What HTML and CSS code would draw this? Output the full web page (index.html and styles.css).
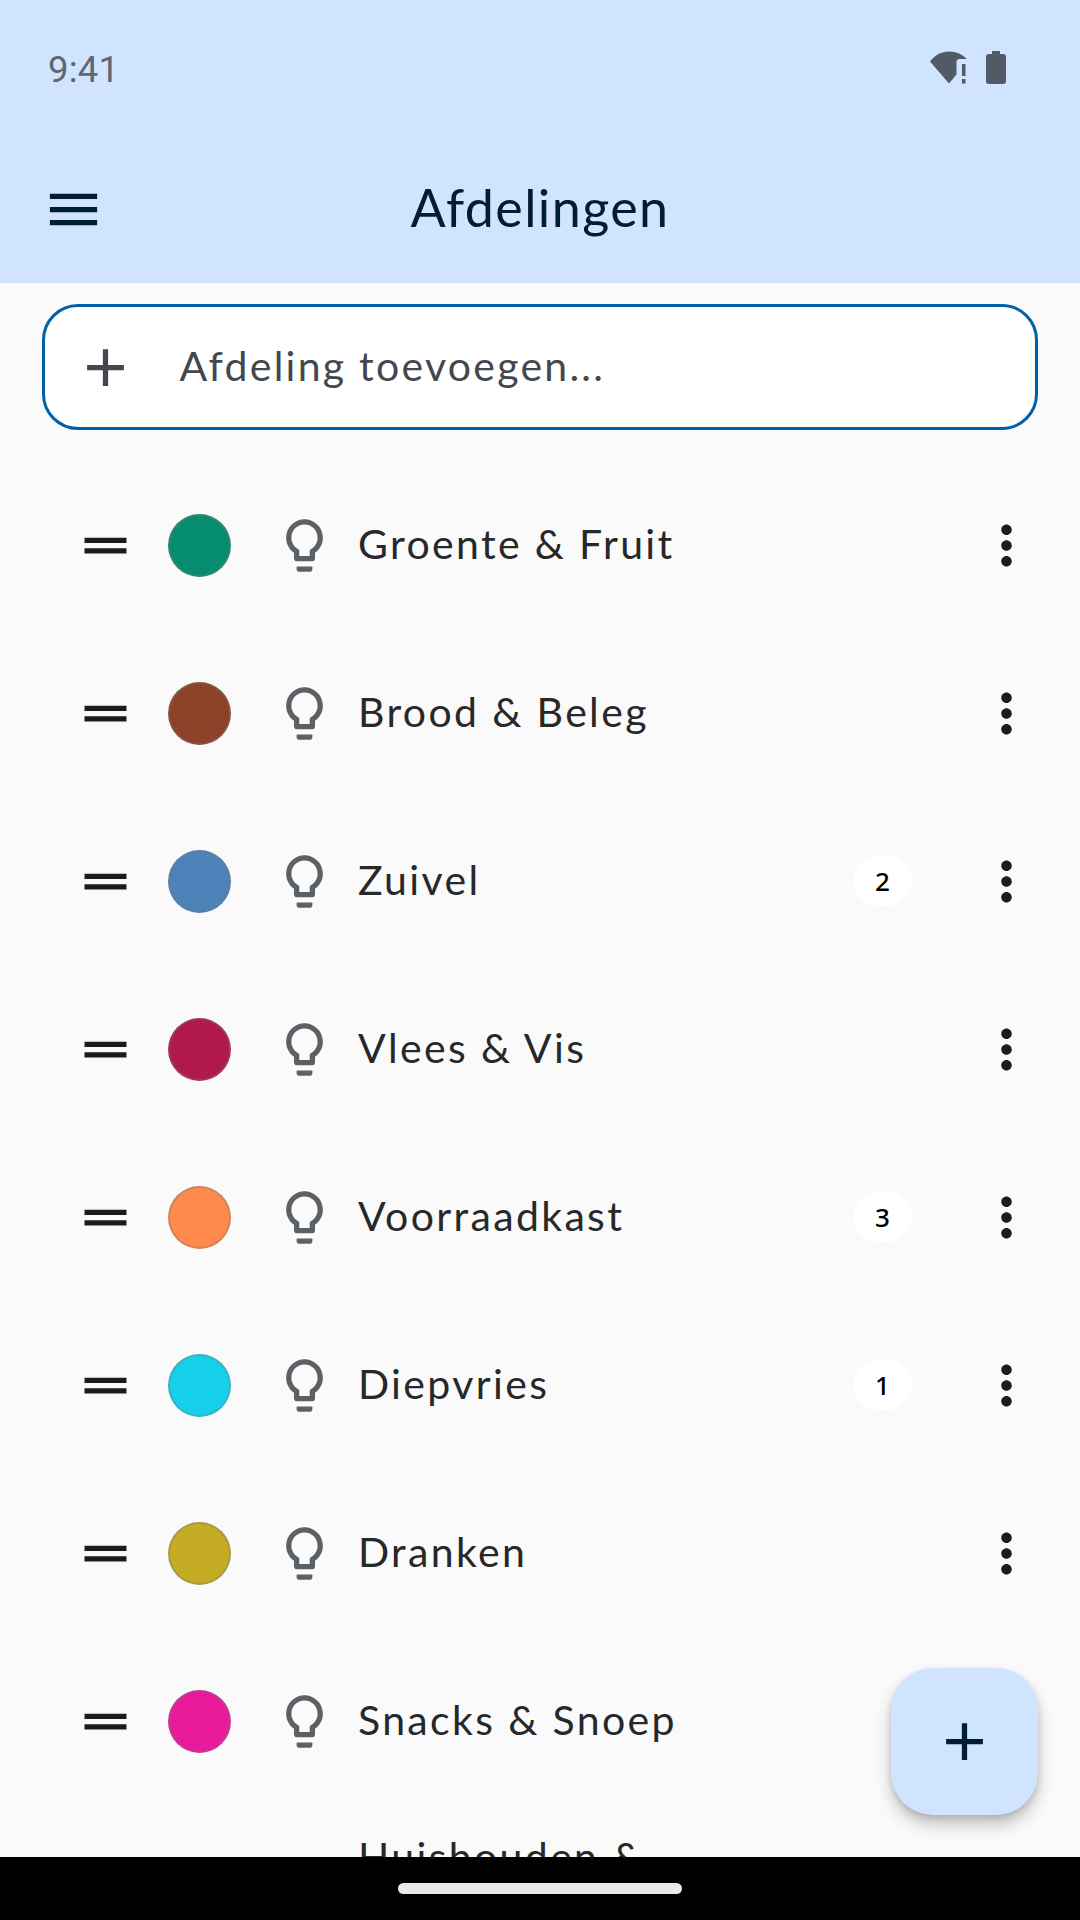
FILE: index.html
```html
<!DOCTYPE html>
<html lang="nl">
<head>
<meta charset="utf-8">
<title>Afdelingen</title>
<link rel="stylesheet" href="styles.css">
</head>
<body>
<svg class="defs" width="0" height="0" aria-hidden="true">
  <symbol id="i-drag" viewBox="0 0 24 24"><path d="M20 9H4v2h16V9zM4 15h16v-2H4v2z"/></symbol>
  <symbol id="i-bulb" viewBox="0 0 24 24"><path d="M9 21c0 .55.45 1 1 1h4c.55 0 1-.45 1-1v-1H9v1zm3-19C8.14 2 5 5.14 5 9c0 2.38 1.19 4.47 3 5.74V17c0 .55.45 1 1 1h6c.55 0 1-.45 1-1v-2.26c1.81-1.27 3-3.36 3-5.74 0-3.86-3.14-7-7-7zm2.85 11.1l-.85.6V16h-4v-2.3l-.85-.6C7.8 12.16 7 10.63 7 9c0-2.76 2.24-5 5-5s5 2.24 5 5c0 1.63-.8 3.16-2.15 4.1z"/></symbol>
  <symbol id="i-more" viewBox="0 0 24 24"><path d="M12 8c1.1 0 2-.9 2-2s-.9-2-2-2-2 .9-2 2 .9 2 2 2zm0 2c-1.1 0-2 .9-2 2s.9 2 2 2 2-.9 2-2-.9-2-2-2zm0 6c-1.1 0-2 .9-2 2s.9 2 2 2 2-.9 2-2-.9-2-2-2z"/></symbol>
  <symbol id="i-add" viewBox="0 0 24 24"><path d="M19 13h-6v6h-2v-6H5v-2h6V5h2v6h6v2z"/></symbol>
</svg>
<div class="screen">
  <header class="appbar">
    <div class="statusbar">
      <span class="clock">9:41</span>
      <div class="status-icons">
        <svg class="wifi" viewBox="0 0 38 33"><path d="M0 10.500C5 4 11.500 0.500 19 0.500c7.500 0 13.500 3 18 7.500h-7.500c-1.800 0-3 1.200-3 3v12.500L19 32.500z"/><path d="M32 13h3.500v12H32zM32 28h3.500v4.500H32z"/></svg>
        <svg class="battery" viewBox="0 0 20 33"><path d="M6 0h8v3h3.500c1.400 0 2.500 1.100 2.500 2.500V30.500c0 1.400-1.100 2.500-2.500 2.500h-15C1.100 33 0 31.900 0 30.500V5.500C0 4.100 1.100 3 2.500 3H6z"/></svg>
      </div>
    </div>
    <div class="toolbar">
      <svg class="icon menu-icon" viewBox="0 0 24 24"><path d="M3 18h18v-2H3v2zm0-5h18v-2H3v2zm0-7v2h18V6H3z"/></svg>
      <h1 class="title">Afdelingen</h1>
    </div>
  </header>
  <main class="content">
    <div class="add-field">
      <svg class="icon add-icon"><use href="#i-add"/></svg>
      <span class="hint">Afdeling toevoegen...</span>
    </div>
    <ul class="list">
      <li class="row"><svg class="icon drag"><use href="#i-drag"/></svg><span class="dot dot-green"></span><svg class="icon bulb"><use href="#i-bulb"/></svg><span class="name">Groente &amp; Fruit</span><span class="more"><svg class="icon"><use href="#i-more"/></svg></span></li>
      <li class="row"><svg class="icon drag"><use href="#i-drag"/></svg><span class="dot dot-brown"></span><svg class="icon bulb"><use href="#i-bulb"/></svg><span class="name">Brood &amp; Beleg</span><span class="more"><svg class="icon"><use href="#i-more"/></svg></span></li>
      <li class="row"><svg class="icon drag"><use href="#i-drag"/></svg><span class="dot dot-blue"></span><svg class="icon bulb"><use href="#i-bulb"/></svg><span class="name">Zuivel</span><span class="badge">2</span><span class="more"><svg class="icon"><use href="#i-more"/></svg></span></li>
      <li class="row"><svg class="icon drag"><use href="#i-drag"/></svg><span class="dot dot-red"></span><svg class="icon bulb"><use href="#i-bulb"/></svg><span class="name">Vlees &amp; Vis</span><span class="more"><svg class="icon"><use href="#i-more"/></svg></span></li>
      <li class="row"><svg class="icon drag"><use href="#i-drag"/></svg><span class="dot dot-orange"></span><svg class="icon bulb"><use href="#i-bulb"/></svg><span class="name">Voorraadkast</span><span class="badge">3</span><span class="more"><svg class="icon"><use href="#i-more"/></svg></span></li>
      <li class="row"><svg class="icon drag"><use href="#i-drag"/></svg><span class="dot dot-cyan"></span><svg class="icon bulb"><use href="#i-bulb"/></svg><span class="name">Diepvries</span><span class="badge">1</span><span class="more"><svg class="icon"><use href="#i-more"/></svg></span></li>
      <li class="row"><svg class="icon drag"><use href="#i-drag"/></svg><span class="dot dot-yellow"></span><svg class="icon bulb"><use href="#i-bulb"/></svg><span class="name">Dranken</span><span class="more"><svg class="icon"><use href="#i-more"/></svg></span></li>
      <li class="row"><svg class="icon drag"><use href="#i-drag"/></svg><span class="dot dot-pink"></span><svg class="icon bulb"><use href="#i-bulb"/></svg><span class="name">Snacks &amp; Snoep</span><span class="more"><svg class="icon"><use href="#i-more"/></svg></span></li>
      <li class="row"><svg class="icon drag"><use href="#i-drag"/></svg><span class="dot"></span><svg class="icon bulb"><use href="#i-bulb"/></svg><span class="name">Huishouden &amp;<br>&nbsp;</span></li>
    </ul>
  </main>
  <button class="fab" type="button" aria-label="Toevoegen"><svg class="icon"><use href="#i-add"/></svg></button>
  <div class="navbar"><span class="handle"></span></div>
</div>
</body>
</html>
```

FILE: styles.css
```css
* { box-sizing: border-box; }
html, body { margin: 0; padding: 0; }
body { background: #fafafa; font-family: "Lato", "Noto Sans", sans-serif; }
.defs { position: absolute; }

.screen { position: relative; width: 1080px; height: 1920px; overflow: hidden; background: #fafafa; }
.icon { display: block; width: 63px; height: 63px; fill: currentColor; flex: none; }

.appbar { height: 283px; background: #d1e4ff; color: #001d36; }
.statusbar { height: 146.500px; display: flex; align-items: flex-start; justify-content: space-between; padding: 49px 74px 0 48px; }
.clock { font-family: "Roboto", sans-serif; font-size: 36.500px; font-weight: 400; line-height: 42px; letter-spacing: 0.200px; color: #5f6671; }
.status-icons { display: flex; align-items: flex-start; gap: 18px; padding-top: 2px; color: #535a67; }
.wifi { display: block; width: 38px; height: 33px; fill: currentColor; }
.battery { display: block; width: 20px; height: 33px; fill: currentColor; }

.toolbar { position: relative; height: 126px; display: flex; align-items: center; justify-content: center; }
.menu-icon { position: absolute; left: 42px; top: 31.500px; }
.title { margin: 0; font-size: 52px; line-height: 64px; font-weight: 400; letter-spacing: 1.400px; padding-bottom: 5px; box-sizing: content-box; }

.content { display: flex; flex-direction: column; }
.add-field { margin: 21px 42px 31px; height: 126px; border: 3px solid #0061a4; border-radius: 36px; background: #fff; display: flex; align-items: center; gap: 43px; padding-left: 28.500px; color: #44474e; }
.hint { font-size: 41px; font-weight: 400; letter-spacing: 2.250px; line-height: 63px; padding-bottom: 3px; box-sizing: content-box; }

.list { list-style: none; margin: 0; padding: 0; }
.row { height: 168px; display: flex; align-items: center; padding: 0 10.500px 0 73.500px; }
.drag { color: #1a1c1e; margin-right: 31.500px; }
.dot { width: 63px; height: 63px; border-radius: 50%; flex: none; margin-right: 42px; border: 2.600px solid rgba(120, 120, 120, 0.35); background-clip: border-box; }
.bulb { color: #5c6166; margin-right: 22px; }
.name { flex: 1; font-size: 41px; font-weight: 400; line-height: 63px; letter-spacing: 2.350px; color: #26282a; padding-bottom: 3px; }
.badge { width: 59px; height: 50px; border-radius: 25px; background: #fff; margin-right: 31.500px; display: flex; align-items: center; justify-content: center; font-family: "Noto Sans", sans-serif; font-size: 26px; font-weight: 500; color: #000; }
.more { width: 126px; height: 126px; display: flex; align-items: center; justify-content: center; color: #1a1c1e; flex: none; }

.dot-green { background-color: #068d6f; }
.dot-brown { background-color: #8b4229; }
.dot-blue { background-color: #4d82b8; }
.dot-red { background-color: #b0184e; }
.dot-orange { background-color: #ff8a4c; }
.dot-cyan { background-color: #16cfea; }
.dot-yellow { background-color: #c4ac24; }
.dot-pink { background-color: #e91a9b; }

.fab { position: absolute; left: 891px; top: 1668px; width: 147px; height: 147px; padding: 0; border: 0; border-radius: 42px; background: #d1e4ff; color: #001d36; display: flex; align-items: center; justify-content: center; box-shadow: 0 10px 16px rgba(0, 0, 0, 0.22), 0 3px 6px rgba(0, 0, 0, 0.12); }

.navbar { position: absolute; left: 0; right: 0; bottom: 0; height: 63px; background: #000; display: flex; justify-content: center; padding-top: 26px; }
.handle { width: 284px; height: 11px; border-radius: 6px; background: #e8e8e8; }
```
